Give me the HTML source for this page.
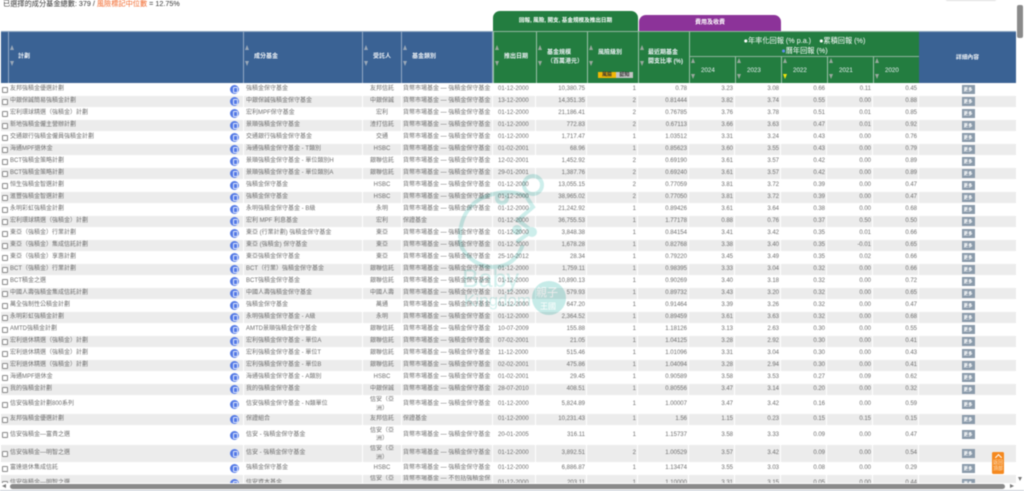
<!DOCTYPE html>
<html lang="zh-Hant"><head><meta charset="utf-8"><title>成分基金</title>
<style>
html,body{margin:0;padding:0;background:#fff;width:1024px;height:491px;overflow:hidden}
body{font-family:"Liberation Sans","Noto Sans CJK TC",sans-serif;position:relative}
#p{position:absolute;left:0;top:0;width:1024px;height:491px;overflow:hidden;filter:blur(.4px)}
.top{position:absolute;left:3px;top:-1px;font-size:7.2px;line-height:9px;color:#333;white-space:nowrap}
.top em{font-style:normal;color:#f2672a}
.tab{position:absolute;color:#fff;text-align:center;border-radius:7px 7px 0 0;white-space:nowrap}
.h{position:absolute;box-sizing:border-box;color:#eef2f6;font-size:6px;font-weight:bold;white-space:nowrap;line-height:9px}
.bl{background:#3a6294;border-right:1px solid #93a9c4;top:31px;height:52px;border-top:1px solid #8fa7c2}
.gr{background:#237d40;border-left:1px solid #9bc0a8;top:31px;height:52px;border-top:1px solid #8fb49c}
.h span{position:absolute}
.u,.d{position:absolute;width:0;height:0;border-left:2.75px solid transparent;border-right:2.75px solid transparent}
.u{border-bottom:5px solid #9aa8b8;left:1px;top:13px}
.d{border-top:5px solid #9aa8b8;left:1px;top:29px}
.gr .u{border-bottom-color:#9aa99e}.gr .d{border-top-color:#9aa99e}
.y .u{top:1px}.y .d{top:17px}
table{position:absolute;left:1px;top:84px;border-collapse:separate;border-spacing:0;table-layout:fixed;width:1015px;font-size:6px;color:#6d6d6d}
td{padding:0;height:12px;line-height:8.4px;border-right:1px solid #fff;border-bottom:1px solid #fff;white-space:nowrap;overflow:hidden;text-align:right;vertical-align:middle;box-sizing:border-box}
tr:nth-child(even) td{background:#ececec}
td:nth-child(1){text-align:left;padding-left:9px;position:relative}
td:nth-child(2){text-align:left;padding-left:2px}
td:nth-child(3){text-align:center}
td:nth-child(4){text-align:left;padding-left:1px}
td:nth-child(5){text-align:left;padding-left:5px}
td:nth-child(n+6){padding-right:1px}
td:nth-child(14){text-align:center;border-right:0;padding:0 0 0 1px}
tr.t td{height:18px}
tr.v td{height:19px}
td i{position:absolute;left:1px;top:50%;margin-top:-2.8px;width:4px;height:4px;border:.6px solid #8a8a8a;border-radius:1px;background:#fff;box-sizing:content-box}
td b{position:absolute;right:4px;top:50%;margin-top:-4.5px;width:9px;height:9px;border-radius:50%;background:#5379e6}
td b:after{content:"";position:absolute;left:2.7px;top:2px;width:3px;height:4.2px;border:.6px solid #dfe7fb;border-radius:1px}
td u{display:inline-block;text-decoration:none;width:13px;height:9px;line-height:9px;background:#8a9aaa;color:#fff;font-size:4.5px;font-weight:bold;vertical-align:middle}
#vt{position:absolute;left:1017px;top:5px;width:6px;height:33px;background:#8a8a8a;border-radius:2px}
#hb{position:absolute;left:0;top:483px;width:1017px;height:8px;background:#fff}
#ht{position:absolute;left:10px;top:484px;width:995px;height:5px;background:#8a8a8a;border-radius:3px}
#hl{position:absolute;left:0;top:490px;width:1024px;height:1px;background:#c9ced6}
.ar{position:absolute;width:0;height:0}
#top{position:absolute;left:992px;top:452px;width:12px;height:22px;background:#f5891f;border-radius:1.5px;color:#fde3c4;font-size:5px;line-height:6px;text-align:center}
#top:before{content:"";display:block;width:4px;height:4px;border-left:1.2px solid #fff;border-top:1.2px solid #fff;transform:rotate(45deg);margin:3px auto 0}
#wm{position:absolute;left:440px;top:165px;mix-blend-mode:multiply}
#sh{position:absolute;left:945px;top:-4px;width:52px;height:5px;border-radius:3px;background:#ddd}
</style></head><body><div id="p">
<div id="sh"></div>
<div class="top">已選擇的成分基金總數: 379 / <em>風險標記中位數</em> = 12.75%</div>
<div class="tab" style="left:493px;top:11px;width:145px;height:20px;background:#237d40;font-size:5.6px;line-height:20px;font-weight:bold">回報, 風險, 開支, 基金規模及推出日期</div>
<div class="tab" style="left:639px;top:15px;width:142px;height:16px;background:#8c3399;font-size:6px;line-height:16px;font-weight:bold">費用及收費</div>

<div class="h bl" style="left:1px;width:8px"></div>
<div class="h bl" style="left:9px;width:235px"><s class="u"></s><s class="d"></s><span style="left:9px;top:21px">計劃</span></div>
<div class="h bl" style="left:244px;width:119px"><s class="u"></s><s class="d"></s><span style="left:10px;top:21px">成分基金</span></div>
<div class="h bl" style="left:363px;width:39px"><s class="u"></s><s class="d"></s><span style="left:10px;top:21px">受託人</span></div>
<div class="h bl" style="left:402px;width:91px"><s class="u"></s><s class="d"></s><span style="left:10px;top:21px">基金類別</span></div>
<div class="h gr" style="left:493px;width:44px"><s class="u"></s><s class="d"></s><span style="left:10px;top:21px">推出日期</span></div>
<div class="h gr" style="left:536px;width:51px"><s class="u"></s><s class="d"></s><span style="left:10px;top:17px">基金規模<br>（百萬港元）</span></div>
<div class="h gr" style="left:587px;width:51px"><s class="u"></s><s class="d"></s><span style="left:10px;top:17px">風險級別</span><span style="left:10px;top:40px;width:18px;height:6px;line-height:6px;background:#f2b705;color:#333;font-size:5px;text-align:center">風險</span><span style="left:28px;top:40px;width:17px;height:6px;line-height:6px;background:#c4c4c4;color:#333;font-size:5px;text-align:center">認知</span></div>
<div class="h gr" style="left:638px;width:51px"><s class="u"></s><s class="d"></s><span style="left:9px;top:17px">最近期基金<br>開支比率 (%)</span></div>
<div class="h gr" style="left:689px;width:230px;height:26px;font-size:7.2px;font-weight:normal;color:#fff;text-align:center;line-height:9.5px;padding-top:4px">●年率化回報 (% p.a.)&nbsp;&nbsp;&nbsp;&nbsp;●累積回報 (%)<br><span style="position:static"><span style="position:static;color:#5f8df0">●</span>曆年回報 (%)</span></div>
<div class="h gr y" style="left:689px;top:56px;height:27px;width:46px"><s class="u"></s><s class="d"></s><span style="left:11px;top:9px;font-size:6.2px;font-weight:normal">2024</span></div>
<div class="h gr y" style="left:735px;top:56px;height:27px;width:46px"><s class="u"></s><s class="d"></s><span style="left:11px;top:9px;font-size:6.2px;font-weight:normal">2023</span></div>
<div class="h gr y" style="left:781px;top:56px;height:27px;width:46px"><s class="u"></s><s class="d" style="border-top-color:#f5e60a"></s><span style="left:11px;top:9px;font-size:6.2px;font-weight:normal">2022</span></div>
<div class="h gr y" style="left:827px;top:56px;height:27px;width:46px"><s class="u"></s><s class="d"></s><span style="left:11px;top:9px;font-size:6.2px;font-weight:normal">2021</span></div>
<div class="h gr y" style="left:873px;top:56px;height:27px;width:46px"><s class="u"></s><s class="d"></s><span style="left:11px;top:9px;font-size:6.2px;font-weight:normal">2020</span></div>
<div class="h bl" style="left:919px;width:97px;border-right:0;text-align:center;line-height:52px;font-size:5.8px">詳細內容</div>

<table><colgroup><col style="width:243px"><col style="width:119px"><col style="width:39px"><col style="width:91px"><col style="width:43px"><col style="width:51px"><col style="width:51px"><col style="width:51px"><col style="width:46px"><col style="width:46px"><col style="width:46px"><col style="width:46px"><col style="width:46px"><col style="width:97px"></colgroup>
<tr><td><i></i>友邦強積金優選計劃<b></b><td>強積金保守基金<td>友邦信託<td>貨幣市場基金 — 強積金保守基金<td>01-12-2000<td>10,380.75<td>1<td>0.78<td>3.23<td>3.08<td>0.66<td>0.11<td>0.45<td><u>更多</u>
<tr><td><i></i>中銀保誠簡易強積金計劃<b></b><td>中銀保誠強積金保守基金<td>中銀保誠<td>貨幣市場基金 — 強積金保守基金<td>13-12-2000<td>14,351.35<td>2<td>0.81444<td>3.82<td>3.74<td>0.55<td>0.00<td>0.88<td><u>更多</u>
<tr><td><i></i>宏利環球精選（強積金）計劃<b></b><td>宏利MPF保守基金<td>宏利<td>貨幣市場基金 — 強積金保守基金<td>01-12-2000<td>21,186.41<td>2<td>0.76785<td>3.76<td>3.78<td>0.51<td>0.01<td>0.85<td><u>更多</u>
<tr><td><i></i>新地強積金僱主營辦計劃<b></b><td>景順強積金保守基金<td>渣打信託<td>貨幣市場基金 — 強積金保守基金<td>01-12-2000<td>772.83<td>2<td>0.67113<td>3.66<td>3.63<td>0.47<td>0.01<td>0.92<td><u>更多</u>
<tr><td><i></i>交通銀行強積金僱員強積金計劃<b></b><td>交通銀行強積金保守基金<td>交通<td>貨幣市場基金 — 強積金保守基金<td>01-12-2000<td>1,717.47<td>1<td>1.03512<td>3.31<td>3.24<td>0.43<td>0.00<td>0.76<td><u>更多</u>
<tr><td><i></i>海通MPF退休金<b></b><td>海通強積金保守基金 - T類別<td>HSBC<td>貨幣市場基金 — 強積金保守基金<td>01-02-2001<td>68.96<td>1<td>0.85623<td>3.60<td>3.55<td>0.43<td>0.00<td>0.79<td><u>更多</u>
<tr><td><i></i>BCT強積金策略計劃<b></b><td>景順強積金保守基金 - 單位類別H<td>銀聯信託<td>貨幣市場基金 — 強積金保守基金<td>12-02-2001<td>1,452.92<td>2<td>0.69190<td>3.61<td>3.57<td>0.42<td>0.00<td>0.89<td><u>更多</u>
<tr><td><i></i>BCT強積金策略計劃<b></b><td>景順強積金保守基金 - 單位類別A<td>銀聯信託<td>貨幣市場基金 — 強積金保守基金<td>29-01-2001<td>1,387.76<td>2<td>0.69240<td>3.61<td>3.57<td>0.42<td>0.00<td>0.89<td><u>更多</u>
<tr><td><i></i>恒生強積金智選計劃<b></b><td>強積金保守基金<td>HSBC<td>貨幣市場基金 — 強積金保守基金<td>01-12-2000<td>13,055.15<td>2<td>0.77059<td>3.81<td>3.72<td>0.39<td>0.00<td>0.47<td><u>更多</u>
<tr><td><i></i>滙豐強積金智選計劃<b></b><td>強積金保守基金<td>HSBC<td>貨幣市場基金 — 強積金保守基金<td>01-12-2000<td>38,965.02<td>2<td>0.77050<td>3.81<td>3.72<td>0.39<td>0.00<td>0.47<td><u>更多</u>
<tr><td><i></i>永明彩虹強積金計劃<b></b><td>永明強積金保守基金 - B級<td>永明<td>貨幣市場基金 — 強積金保守基金<td>01-12-2000<td>21,242.92<td>1<td>0.89426<td>3.61<td>3.64<td>0.38<td>0.00<td>0.68<td><u>更多</u>
<tr><td><i></i>宏利環球精選（強積金）計劃<b></b><td>宏利 MPF 利息基金<td>宏利<td>保證基金<td>01-12-2000<td>36,755.53<td>1<td>1.77178<td>0.88<td>0.76<td>0.37<td>0.50<td>0.50<td><u>更多</u>
<tr><td><i></i>東亞（強積金）行業計劃<b></b><td>東亞 (行業計劃) 強積金保守基金<td>東亞<td>貨幣市場基金 — 強積金保守基金<td>01-12-2000<td>3,848.38<td>1<td>0.84154<td>3.41<td>3.42<td>0.35<td>0.01<td>0.66<td><u>更多</u>
<tr><td><i></i>東亞（強積金）集成信託計劃<b></b><td>東亞 (強積金) 保守基金<td>東亞<td>貨幣市場基金 — 強積金保守基金<td>01-12-2000<td>1,678.28<td>1<td>0.82768<td>3.38<td>3.40<td>0.35<td>-0.01<td>0.65<td><u>更多</u>
<tr><td><i></i>東亞（強積金）享惠計劃<b></b><td>東亞強積金保守基金<td>東亞<td>貨幣市場基金 — 強積金保守基金<td>25-10-2012<td>28.34<td>1<td>0.79220<td>3.45<td>3.49<td>0.35<td>0.02<td>0.66<td><u>更多</u>
<tr><td><i></i>BCT（強積金）行業計劃<b></b><td>BCT（行業）強積金保守基金<td>銀聯信託<td>貨幣市場基金 — 強積金保守基金<td>01-12-2000<td>1,759.11<td>1<td>0.98395<td>3.33<td>3.04<td>0.32<td>0.00<td>0.66<td><u>更多</u>
<tr><td><i></i>BCT積金之選<b></b><td>BCT強積金保守基金<td>銀聯信託<td>貨幣市場基金 — 強積金保守基金<td>01-12-2000<td>10,890.13<td>1<td>0.90269<td>3.40<td>3.18<td>0.32<td>0.00<td>0.72<td><u>更多</u>
<tr><td><i></i>中國人壽強積金集成信託計劃<b></b><td>中國人壽強積金保守基金<td>中國人壽<td>貨幣市場基金 — 強積金保守基金<td>01-12-2000<td>579.93<td>1<td>0.89732<td>3.43<td>3.20<td>0.32<td>0.00<td>0.65<td><u>更多</u>
<tr><td><i></i>萬全強制性公積金計劃<b></b><td>強積金保守基金<td>萬通<td>貨幣市場基金 — 強積金保守基金<td>01-12-2000<td>647.20<td>1<td>0.91464<td>3.39<td>3.26<td>0.32<td>0.00<td>0.47<td><u>更多</u>
<tr><td><i></i>永明彩虹強積金計劃<b></b><td>永明強積金保守基金 - A級<td>永明<td>貨幣市場基金 — 強積金保守基金<td>01-12-2000<td>2,364.52<td>1<td>0.89459<td>3.61<td>3.63<td>0.32<td>0.00<td>0.68<td><u>更多</u>
<tr><td><i></i>AMTD強積金計劃<b></b><td>AMTD景順強積金保守基金<td>銀聯信託<td>貨幣市場基金 — 強積金保守基金<td>10-07-2009<td>155.88<td>1<td>1.18126<td>3.13<td>2.63<td>0.30<td>0.00<td>0.55<td><u>更多</u>
<tr><td><i></i>宏利退休精選（強積金）計劃<b></b><td>宏利強積金保守基金 - 單位A<td>銀聯信託<td>貨幣市場基金 — 強積金保守基金<td>07-02-2001<td>21.05<td>1<td>1.04125<td>3.28<td>2.92<td>0.30<td>0.00<td>0.41<td><u>更多</u>
<tr><td><i></i>宏利退休精選（強積金）計劃<b></b><td>宏利強積金保守基金 - 單位T<td>銀聯信託<td>貨幣市場基金 — 強積金保守基金<td>11-12-2000<td>515.46<td>1<td>1.01096<td>3.31<td>3.04<td>0.30<td>0.00<td>0.43<td><u>更多</u>
<tr><td><i></i>宏利退休精選（強積金）計劃<b></b><td>宏利強積金保守基金 - 單位B<td>銀聯信託<td>貨幣市場基金 — 強積金保守基金<td>02-02-2001<td>475.86<td>1<td>1.04094<td>3.28<td>2.94<td>0.30<td>0.00<td>0.41<td><u>更多</u>
<tr><td><i></i>海通MPF退休金<b></b><td>海通強積金保守基金 - A類別<td>HSBC<td>貨幣市場基金 — 強積金保守基金<td>01-02-2001<td>29.45<td>1<td>0.90589<td>3.58<td>3.53<td>0.27<td>0.09<td>0.62<td><u>更多</u>
<tr><td><i></i>我的強積金計劃<b></b><td>我的強積金保守基金<td>中銀保誠<td>貨幣市場基金 — 強積金保守基金<td>28-07-2010<td>408.51<td>1<td>0.80556<td>3.47<td>3.14<td>0.20<td>0.00<td>0.32<td><u>更多</u>
<tr class="t"><td><i></i>信安強積金計劃800系列<b></b><td>信安強積金保守基金 - N類單位<td>信安（亞<br>洲）<td>貨幣市場基金 — 強積金保守基金<td>01-12-2000<td>5,824.89<td>1<td>1.00007<td>3.47<td>3.42<td>0.16<td>0.00<td>0.59<td><u>更多</u>
<tr><td><i></i>友邦強積金優選計劃<b></b><td>保證組合<td>友邦信託<td>保證基金<td>01-12-2000<td>10,231.43<td>1<td>1.56<td>1.15<td>0.23<td>0.15<td>0.15<td>0.15<td><u>更多</u>
<tr class="v"><td><i></i>信安強積金—富貴之選<b></b><td>信安 - 強積金保守基金<td>信安（亞<br>洲）<td>貨幣市場基金 — 強積金保守基金<td>20-01-2005<td>316.11<td>1<td>1.15737<td>3.58<td>3.33<td>0.09<td>0.00<td>0.47<td><u>更多</u>
<tr class="t"><td><i></i>信安強積金—明智之選<b></b><td>信安 - 強積金保守基金<td>信安（亞<br>洲）<td>貨幣市場基金 — 強積金保守基金<td>01-12-2000<td>3,892.51<td>2<td>1.00529<td>3.57<td>3.42<td>0.09<td>0.00<td>0.54<td><u>更多</u>
<tr><td><i></i>富達退休集成信託<b></b><td>強積金保守基金<td>HSBC<td>貨幣市場基金 — 強積金保守基金<td>01-12-2000<td>6,886.87<td>1<td>1.13474<td>3.55<td>3.03<td>0.08<td>0.00<td>0.29<td><u>更多</u>
<tr class="t"><td><i></i>信安強積金—明智之選<b></b><td>信安資本基金<td>信安（亞<br>洲）<td>貨幣市場基金 — 不包括強積金保<br>守基金<td>01-12-2000<td>203.11<td>1<td>1.10000<td>3.31<td>3.15<td>0.05<td>0.00<td>0.44<td><u>更多</u>
</table>

<svg id="wm" width="130" height="160" viewBox="0 0 130 160" fill="none" stroke="#cdeeeb" stroke-width="4" stroke-linecap="round">
<path d="M20 72C20 50 32 36 47 31C60 26 74 26 86 31"/>
<path d="M20 76C22 90 38 102 53 102C66 102 76 96 82 82"/>
<circle cx="62" cy="33" r="5"/>
<circle cx="93" cy="20" r="9"/>
<path d="M86 31L93 42L78 55L92 66L78 76"/>
<circle cx="77" cy="65" r="3" fill="#cdeeeb"/>
<circle cx="92" cy="67" r="3" fill="#cdeeeb"/>
<circle cx="109" cy="133" r="17" fill="#c6ebe8" stroke="none"/>
<g stroke="none" font-family="Liberation Sans,sans-serif">
<text x="22" y="122" font-size="25" fill="#d3f0ed">Baby</text>
<text x="24" y="141" font-size="17" fill="#d3f0ed">Kingdom</text>
<text x="96" y="131" font-size="11" fill="#fff" font-family="Noto Sans CJK TC,sans-serif">親子</text>
<text x="100" y="144" font-size="8" fill="#fff" font-family="Noto Sans CJK TC,sans-serif">王國</text>
</g>
</svg>

<div id="hb"></div><div id="ht"></div><div id="hl"></div>
<div class="ar" style="left:2px;top:484px;border-top:2.5px solid transparent;border-bottom:2.5px solid transparent;border-right:4px solid #777"></div>
<div class="ar" style="left:1010px;top:484px;border-top:2.5px solid transparent;border-bottom:2.5px solid transparent;border-left:4px solid #777"></div>
<div class="ar" style="left:1018px;top:477px;border-left:2.5px solid transparent;border-right:2.5px solid transparent;border-top:4px solid #777"></div>
<div id="vt"></div>
<div id="top">返回<br>頂部</div>
</div></body></html>
